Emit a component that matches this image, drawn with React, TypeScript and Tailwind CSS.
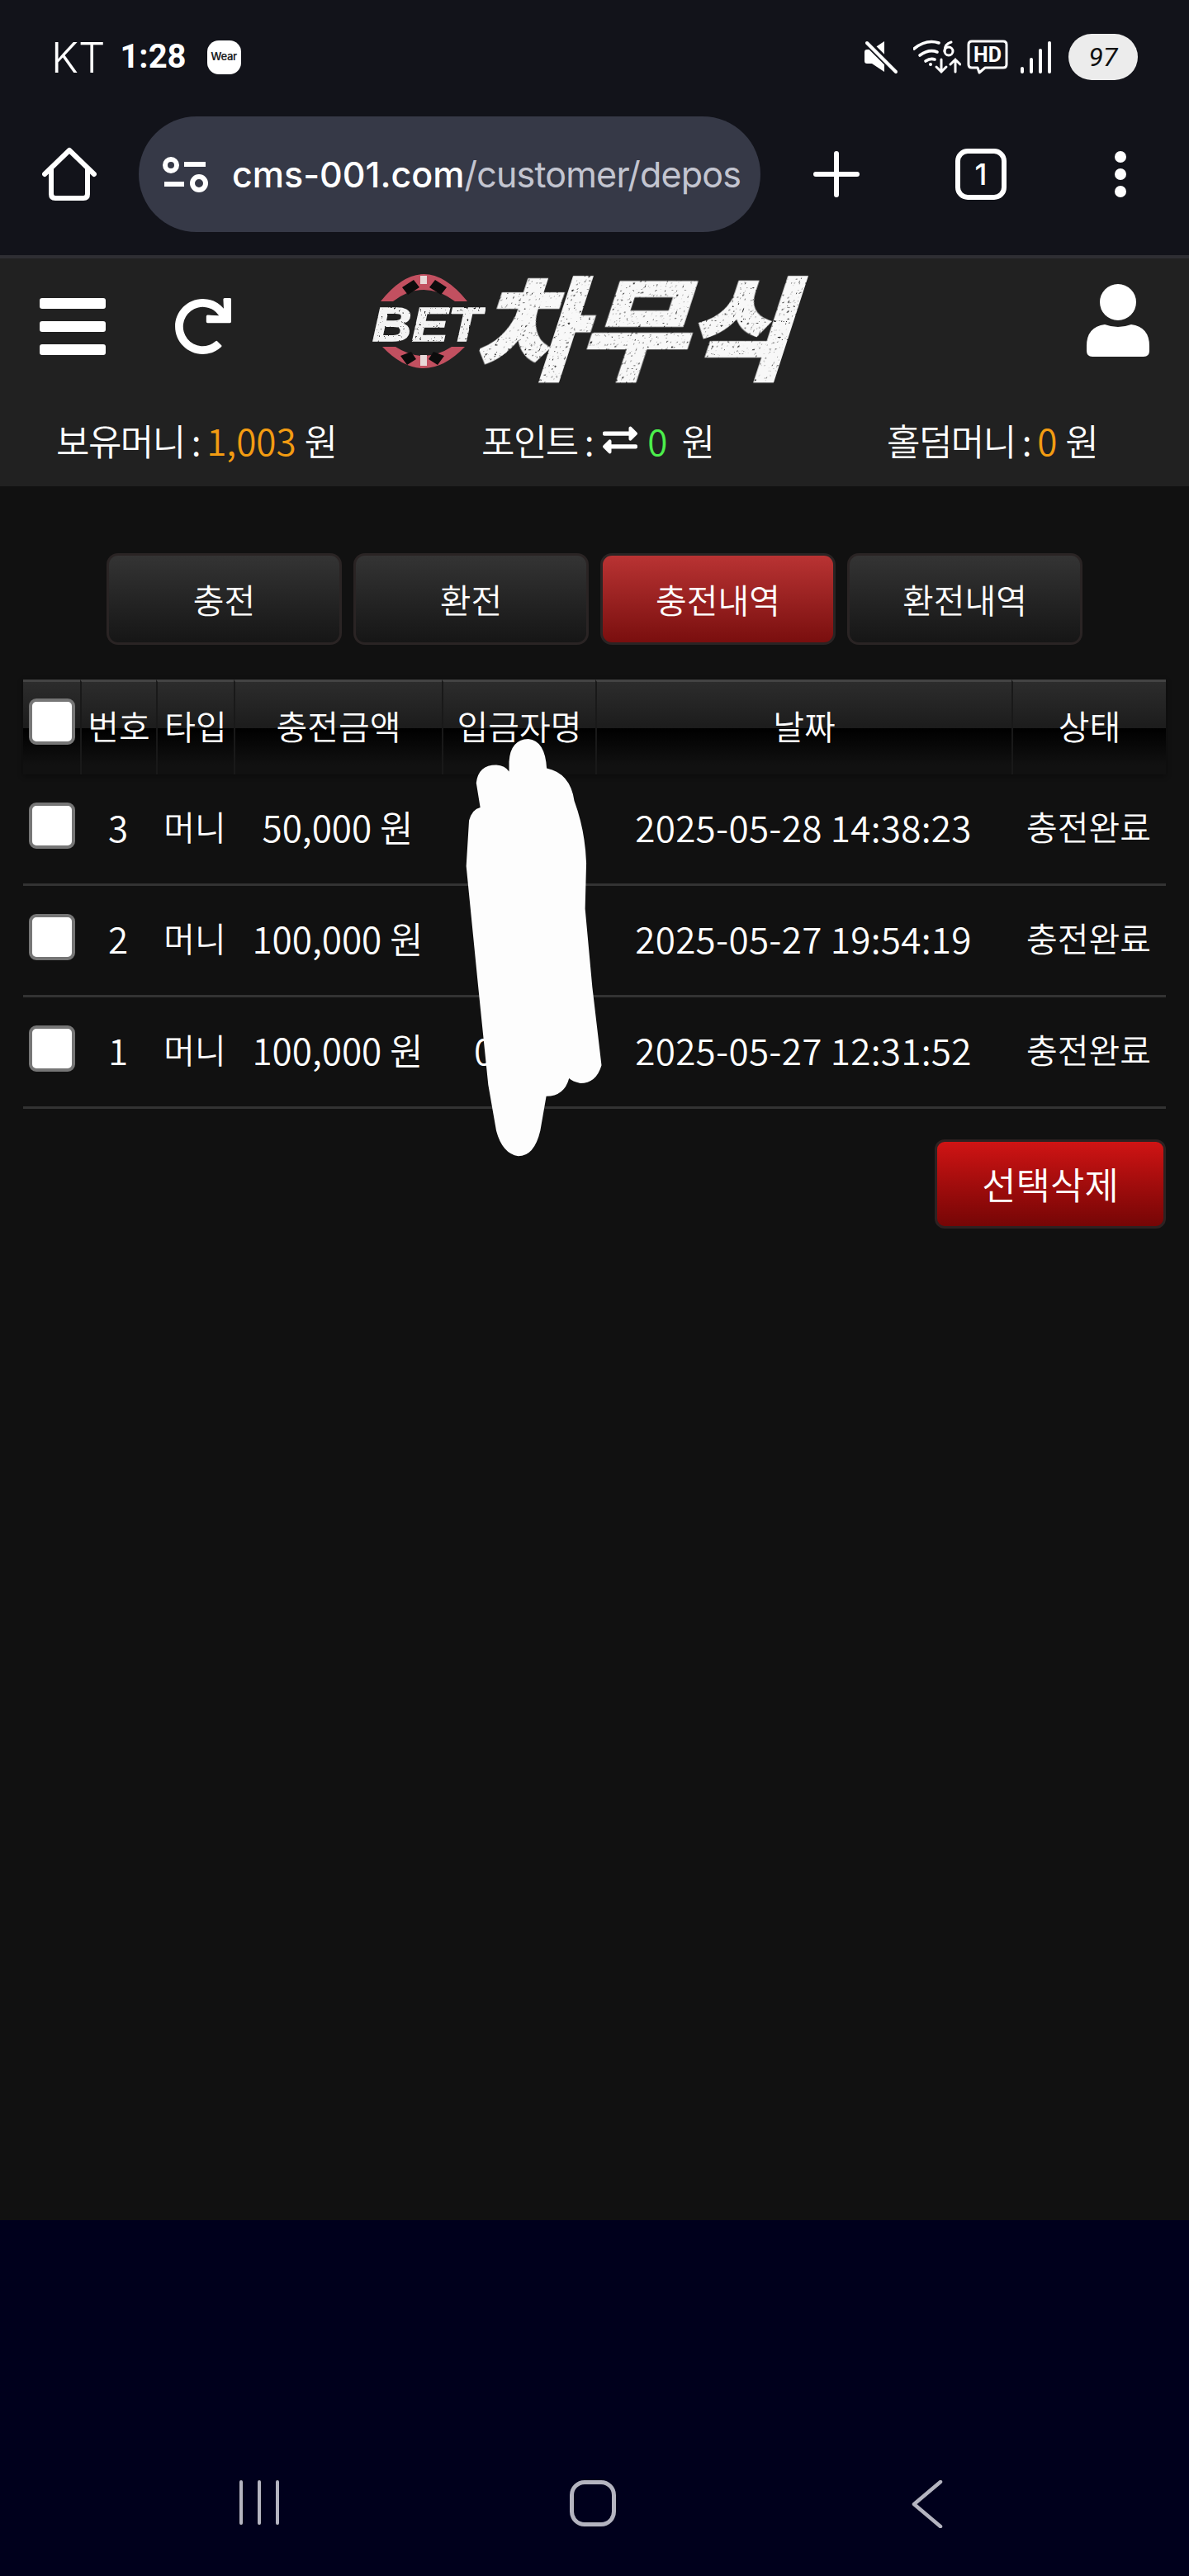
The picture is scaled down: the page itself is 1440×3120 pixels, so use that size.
import { FaExchangeAlt, FaRedo } from "react-icons/fa";

const KR = "font-['Noto_Sans_CJK_KR','Noto_Sans',sans-serif]";

const COLUMNS = "grid grid-cols-[69px_92px_94px_252px_186px_504px_187px]";

const HEADERS = ["번호", "타입", "충전금액", "입금자명", "날짜", "상태"];

const ROWS = [
    { no: 3, type: "머니", amount: "50,000 원", name: "", date: "2025-05-28 14:38:23", status: "충전완료" },
    { no: 2, type: "머니", amount: "100,000 원", name: "", date: "2025-05-27 19:54:19", status: "충전완료" },
    { no: 1, type: "머니", amount: "100,000 원", name: "0", date: "2025-05-27 12:31:52", status: "충전완료" },
];

const TABS = [
    { label: "충전", active: false },
    { label: "환전", active: false },
    { label: "충전내역", active: true },
    { label: "환전내역", active: false },
];

const Checkbox = () => (
    <div className="w-[56px] h-[56px] bg-white border-[4px] border-[#767676] rounded-[9px]"></div>
);

const StatusIcons = () => (
    <div className="flex flex-row items-center">
        {/* muted speaker */}
        <svg width="42" height="42" viewBox="0 0 42 42">
            <path d="M1 15q0-3 3-3h6L25 2v37L10 29H4q-3 0-3-3z" fill="#fff" />
            <path d="M4 3l36 36" stroke="#12131a" strokeWidth="9" />
            <path d="M4 4l35 35" stroke="#fff" strokeWidth="4" strokeLinecap="round" />
        </svg>
        {/* wifi 6 with arrows */}
        <svg width="58" height="42" viewBox="0 0 58 42" className="ml-[18px]" fill="none" stroke="#fff" strokeWidth="3.6" strokeLinecap="round">
            <path d="M1 11q15-12 30-7" />
            <path d="M8 19q11-8 21-4" />
            <path d="M15 26q6-4 11-2" />
            <circle cx="21" cy="30" r="2" fill="#fff" stroke="none" />
            <circle cx="43" cy="14" r="5" strokeWidth="3" />
            <path d="M38 14q0-9 8-11" strokeWidth="3" />
            <path d="M34 24v15m-6-6l6 6 6-6" strokeWidth="3" />
            <path d="M51 39V24m-6 6l6-6 6 6" strokeWidth="3" />
        </svg>
        {/* HD call bubble */}
        <svg width="50" height="42" viewBox="0 0 50 42" className="ml-[7px]" fill="none">
            <path d="M6 2h38q4 0 4 4v24q0 4-4 4H22l-7 6-2-6H6q-4 0-4-4V6q0-4 4-4z" stroke="#fff" strokeWidth="3" strokeLinejoin="round" />
            <text x="25" y="27" textAnchor="middle" fill="#fff" fontSize="25" fontWeight="700" fontFamily="Roboto, sans-serif">HD</text>
        </svg>
        {/* signal bars */}
        <div className="ml-[15px] flex flex-row items-end gap-[7px] h-[40px]">
            <div className="w-[4px] h-[8px] bg-white rounded-sm"></div>
            <div className="w-[4px] h-[19px] bg-white rounded-sm"></div>
            <div className="w-[4px] h-[30px] bg-white rounded-sm"></div>
            <div className="w-[4px] h-[39px] bg-white rounded-sm"></div>
        </div>
        <div className="ml-[21px] w-[84px] h-[56px] rounded-full bg-[#ececec] flex items-center justify-center text-[#111] text-[32px] italic font-['Roboto',sans-serif]">
            97
        </div>
    </div>
);

const StatusBar = () => (
    <div className="h-[138px] pl-[62px] pr-[62px] flex flex-row items-center justify-between">
        <div className="flex flex-row items-center">
            <span className="text-white text-[51px] leading-none font-light font-['Inter',sans-serif]">KT</span>
            <span className="ml-[18px] text-white text-[40px] leading-none font-bold font-['Roboto',sans-serif]">1:28</span>
            <div className="ml-[25px] w-[41px] h-[41px] rounded-[14px] bg-white flex items-center justify-center text-[#222] text-[13px] font-semibold tracking-tight font-['Inter',sans-serif]">
                Wear
            </div>
        </div>
        <StatusIcons />
    </div>
);

const BrowserToolbar = () => (
    <div className="mt-[3px] h-[140px] flex flex-row items-center relative">
        <svg width="66" height="66" viewBox="0 0 66 66" fill="none" stroke="#fff" strokeWidth="6" strokeLinecap="round" strokeLinejoin="round" className="ml-[51px]">
            <path d="M3 33L33 4l30 29" />
            <path d="M11 27v30q0 5 5 5h34q5 0 5-5V27" />
        </svg>
        <div className="ml-[51px] w-[753px] h-[140px] rounded-[70px] bg-[#363947] flex flex-row items-center pl-[29px] overflow-hidden">
            <svg width="56" height="44" viewBox="0 0 56 44" fill="none" stroke="#fff" strokeWidth="6" className="shrink-0">
                <circle cx="10" cy="11" r="7" />
                <path d="M26 10h26" />
                <path d="M2 34h24" />
                <circle cx="44" cy="33" r="8" />
            </svg>
            <div className="ml-[28px] whitespace-nowrap text-[43px] leading-[56px] font-['Inter',sans-serif]">
                <span className="text-white font-medium">cms-001.com</span>
                <span className="text-[#c3c5d0] tracking-[-0.8px]">/customer/depos</span>
            </div>
        </div>
        <svg width="56" height="56" viewBox="0 0 56 56" stroke="#fff" strokeWidth="6" strokeLinecap="round" className="ml-[64px]">
            <path d="M28 3v50M3 28h50" />
        </svg>
        <div className="ml-[116px] w-[62px] h-[62px] rounded-[15px] border-[6px] border-white flex items-center justify-center text-white text-[36px] font-medium font-['Inter',sans-serif]">
            1
        </div>
        <div className="ml-[131px] flex flex-col gap-[7px]">
            <div className="w-[14px] h-[14px] rounded-full bg-white"></div>
            <div className="w-[14px] h-[14px] rounded-full bg-white"></div>
            <div className="w-[14px] h-[14px] rounded-full bg-white"></div>
        </div>
    </div>
);

// casino chip ring, BET lettering and the brand word
const Logo = () => (
    <svg width="530" height="126" viewBox="0 0 530 126" className="block overflow-visible">
        <defs>
            <filter id="worn" x="0" y="-10%" width="100%" height="120%">
                <feTurbulence type="fractalNoise" baseFrequency="0.35" numOctaves="2" seed="4" result="noise" />
                <feColorMatrix in="noise" type="matrix" values="0 0 0 0 0  0 0 0 0 0  0 0 0 0 0  0 0 0 -9 3" result="specks" />
                <feComposite in="SourceGraphic" in2="specks" operator="out" />
            </filter>
        </defs>
        <path d="M10 33Q62 -33 115 33L100 33Q62 5 25 33Z" fill="#c25060" />
        <path d="M12 88Q62 140 112 88L96 88Q62 110 28 88Z" fill="#c25060" />
        <path d="M36 16l14-9 7 9-14 9zM90 16l-14-9-7 9 14 9zM34 99l13-5 6 9-11 7zM87 99l-13-5-6 9 11 7z" fill="#0c0c0c" />
        <path d="M58 2h8v10h-8zM58 98h8v13h-8z" fill="#e8d8d8" />
        <text x="0" y="81" fill="#f4f4f4" stroke="#f4f4f4" strokeWidth="1.5" fontSize="57" fontWeight="900" fontStyle="italic" fontFamily="'Liberation Sans', sans-serif" textLength="132" lengthAdjust="spacingAndGlyphs" filter="url(#worn)">BET</text>
        <g transform="translate(122 116) skewX(-18)">
            <text x="0" y="0" fill="#f8f8f8" stroke="#f8f8f8" strokeWidth="6" fontSize="132" fontWeight="700" fontFamily="'Noto Sans CJK KR', sans-serif" textLength="381" lengthAdjust="spacingAndGlyphs" filter="url(#worn)">차무식</text>
        </g>
    </svg>
);

const SiteHeader = () => (
    <div className="h-[276px] bg-[#212121] flex flex-col">
        <div className="h-[142px] mt-[11px] flex flex-row items-center relative">
            <div className="ml-[48px] flex flex-col gap-[15px] w-[80px]">
                <div className="h-[13px] bg-white rounded-[3px]"></div>
                <div className="h-[13px] bg-white rounded-[3px]"></div>
                <div className="h-[13px] bg-white rounded-[3px]"></div>
            </div>
            <FaRedo className="ml-[83px] text-white text-[69px]" />
            <div className="ml-[171px]">
                <Logo />
            </div>
            <svg width="76" height="88" viewBox="0 0 76 88" fill="#fff" className="ml-[335px] mb-[14px]">
                <ellipse cx="38" cy="22" rx="22" ry="22" />
                <path d="M22 49q16 6 32 0 22 3 22 26v6q0 7-7 7H7q-7 0-7-7v-6q0-23 22-26z" />
            </svg>
        </div>
        <div className={`grid grid-cols-[515px_491px_1fr] pl-[68px] mt-[37px] text-white text-[44px] leading-[60px] font-[350] ${KR}`}>
            <div>
                <span className="tracking-[-1.6px]">보유머니 : </span>
                <span className="text-[#f39c12]">1,003</span> 원
            </div>
            <div className="flex flex-row items-center whitespace-pre">
                <span className="tracking-[-1.6px]">포인트 : </span>
                <FaExchangeAlt className="text-[42px] ml-[4px] mr-[12px]" />
                <span className="text-[#4cef4c]">0</span>
                <span className="ml-[17px]">원</span>
            </div>
            <div>
                <span className="tracking-[-1.6px]">홀덤머니 : </span>
                <span className="text-[#f39c12]">0</span> 원
            </div>
        </div>
    </div>
);

const TabMenu = () => (
    <div className="mt-[81px] flex flex-row justify-center gap-[14.5px]">
        {TABS.map((tab) => (
            <div
                key={tab.label}
                className={`w-[284.5px] h-[111px] rounded-[14px] border-[3px] border-[#2a2424] flex items-center justify-center text-white text-[41px] font-[350] ${KR} ${
                    tab.active ? "bg-gradient-to-b from-[#b93333] to-[#7a0e0e]" : "bg-gradient-to-b from-[#343434] to-[#161616]"
                }`}
            >
                {tab.label}
            </div>
        ))}
    </div>
);

const DepositTable = () => (
    <div className={`mt-[42px] mx-[28px] text-white text-[41px] font-[350] ${KR}`}>
        <div className={`${COLUMNS} h-[115px] shadow-[0_2px_6px_rgba(0,0,0,0.4)]`}>
            <div className="relative border-t-[3px] border-[#434343] bg-[linear-gradient(#2c2c2c_0%,#1c1c1c_50%,#000_50%,#111_90%)]">
                <div className="absolute left-[7px] top-[20px]">
                    <Checkbox />
                </div>
            </div>
            {HEADERS.map((header) => (
                <div
                    key={header}
                    className="pb-[6px] border-t-[3px] border-[#434343] border-l-[2px] border-l-[#191919] flex items-center justify-center bg-[linear-gradient(#2c2c2c_0%,#1c1c1c_50%,#000_50%,#111_90%)]"
                >
                    {header}
                </div>
            ))}
        </div>
        {ROWS.map((row) => (
            <div key={row.no} className={`${COLUMNS} h-[135px] pb-[6px] border-b-[3px] border-[#333] items-center`}>
                <div className="pl-[7px] -mt-[2px]">
                    <Checkbox />
                </div>
                <div className="text-center text-[44px]">{row.no}</div>
                <div className="text-center">{row.type}</div>
                <div className="text-center whitespace-nowrap text-[44px]">{row.amount}</div>
                <div className="pl-[39px] text-[44px]">{row.name}</div>
                <div className="text-center whitespace-nowrap text-[44px] tracking-[0.3px]">{row.date}</div>
                <div className="text-center">{row.status}</div>
            </div>
        ))}
        <div className="mt-[37px] flex justify-end">
            <div className="w-[280px] h-[108px] rounded-[12px] border-[3px] border-[#2e2222] bg-gradient-to-b from-[#d01414] to-[#760606] flex items-center justify-center text-[45px]">
                선택삭제
            </div>
        </div>
    </div>
);

const NavBar = () => (
    <div className="h-[431px] bg-[#00001c] flex flex-row items-start pt-[315px] relative">
        <div className="ml-[290px] flex flex-row gap-[18px]">
            <div className="w-[4px] h-[54px] bg-[#b4b4c0] rounded-full"></div>
            <div className="w-[4px] h-[54px] bg-[#b4b4c0] rounded-full"></div>
            <div className="w-[4px] h-[54px] bg-[#b4b4c0] rounded-full"></div>
        </div>
        <div className="ml-[352px] w-[56px] h-[56px] rounded-[18px] border-[5px] border-[#b4b4c0]"></div>
        <svg width="38" height="58" viewBox="0 0 38 58" fill="none" stroke="#b4b4c0" strokeWidth="4.5" strokeLinecap="round" strokeLinejoin="round" className="ml-[358px]">
            <path d="M35 2L3 29l32 27" />
        </svg>
    </div>
);

// paint-over stroke covering the depositor names
const Scribble = () => (
    <svg width="760" height="620" viewBox="0 0 1568 1568" preserveAspectRatio="none" className="absolute left-0 top-[800px]">
        <path
            d="M1272 310Q1275 242 1320 240 1362 245 1366 330 1425 345 1435 430 1462 520 1465 620L1462 760 1480 1000 1503 1240Q1490 1295 1450 1295 1430 1290 1422 1280 1410 1335 1365 1335L1350 1440Q1335 1518 1295 1518 1255 1510 1240 1440L1220 1300 1195 1000 1165 630 1172 490Q1180 455 1200 450L1190 375Q1195 320 1240 320 1262 322 1272 340Z"
            fill="#fdfdfd"
        />
    </svg>
);

const App: React.FC = () => {
    return (
        <div className="relative w-[1440px] h-[3120px] flex flex-col bg-[#111] overflow-hidden">
            <div className="h-[309px] bg-[#12131a] shrink-0">
                <StatusBar />
                <BrowserToolbar />
            </div>
            <div className="h-[4px] bg-[#2e2e33] shrink-0"></div>
            <SiteHeader />
            <div className="flex-1 bg-[#111]">
                <TabMenu />
                <DepositTable />
            </div>
            <NavBar />
            <Scribble />
        </div>
    );
};
export default App;
